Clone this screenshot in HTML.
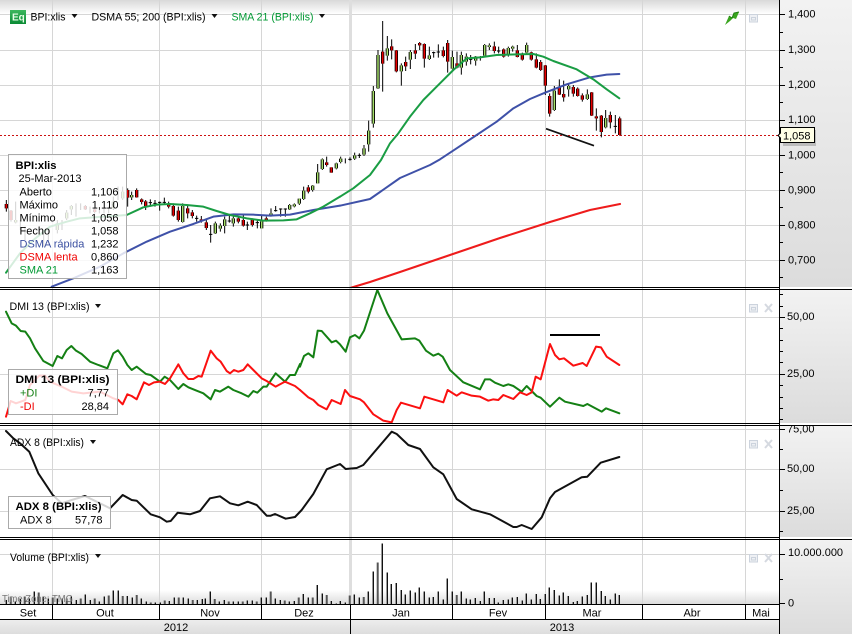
<!DOCTYPE html>
<html><head><meta charset="utf-8"><style>
html,body{margin:0;padding:0;background:#fff}
svg{display:block}
text{font-family:"Liberation Sans",sans-serif;font-size:11px;fill:#000}
.b{font-weight:bold}
.r{text-anchor:end}
.m{text-anchor:middle}
.l{fill:none;stroke-linejoin:round;stroke-linecap:round}
</style></head><body>
<svg width="852" height="634" viewBox="0 0 852 634" xmlns="http://www.w3.org/2000/svg">
<defs>
<linearGradient id="top" x1="0" y1="0" x2="0" y2="1"><stop offset="0" stop-color="#d9d9d9"/><stop offset="1" stop-color="#fff"/></linearGradient>
<linearGradient id="vb" x1="0" y1="0" x2="0" y2="1"><stop offset="0" stop-color="#fff"/><stop offset="1" stop-color="#dcdcdc"/></linearGradient>
<linearGradient id="ax" x1="0" y1="0" x2="0" y2="1"><stop offset="0" stop-color="#f2f2f2"/><stop offset="1" stop-color="#dcdcdc"/></linearGradient>
<linearGradient id="yr" x1="0" y1="0" x2="0" y2="1"><stop offset="0" stop-color="#eeeeee"/><stop offset="1" stop-color="#dddddd"/></linearGradient>
<linearGradient id="eq" x1="0" y1="0" x2="0" y2="1"><stop offset="0" stop-color="#3db85e"/><stop offset="1" stop-color="#0a8a34"/></linearGradient>
<clipPath id="c1"><rect x="0" y="0" width="779" height="287"/></clipPath>
<clipPath id="c2"><rect x="0" y="290" width="779" height="133"/></clipPath>
<clipPath id="c3"><rect x="0" y="426" width="779" height="111"/></clipPath>
<clipPath id="cax"><rect x="780" y="426" width="72" height="20"/></clipPath>
<path id="b1g" fill="none" d="M47 660V667M172 670V690M200 638V655M214 618V628M340 605V625M368 575V595M395 585V592M548 618V666M646 670V700M661 677V686M674 658V678M700 655V670M785 664V685M813 640V647M869 615V628M883 613V619M898 596V611M911 572V597M938 557V570M953 517V550M967 478V507M1009 490V505"/>
<path id="b1r" fill="none" d="M19 612V625M33 632V660M256 618V628M284 628V636M383 570V593M410 570V592M425 598V606M437 604V619M506 612V620M520 618V647M535 632V660M563 625V640M577 637V648M604 658V662M619 667V684M715 655V665M730 660V677M757 660V675M799 655V660M925 562V575M980 487V495M994 502V518"/>
<path id="b2g" fill="none" d="M2 476V486M44 466V476M72 445V464M86 392V433M100 273V371M114 165V265M142 145V167M184 196V214M211 156V179M268 166V177M337 171V206M364 165V203M379 170V185M407 170V182M434 135V167M448 136V141M505 144V163M518 140V146M560 135V158M643 272V330M686 258V268M742 283V297M797 354V382"/>
<path id="b2r" fill="none" d="M128 155V191M155 139V151M169 151V214M197 186V199M226 151V161M239 129V136M253 132V176M310 151V168M323 129V185M351 190V203M463 139V153M491 148V170M532 151V171M547 165V179M574 157V179M589 178V203M602 186V210M616 196V257M629 288V341M658 262V284M671 282V292M700 261V281M713 266V288M727 286V299M755 277V347M769 349V355M784 347V396M811 345V367M839 355V405"/>
<path id="v1" fill="none" d="M19 207V195M33 207V185M47 207V200M61 207V190M75 207V185M89 207V190M103 207V170M117 207V172M131 207V185M145 207V190M159 207V188M173 207V190M187 207V190M201 207V190M215 207V185M229 207V195M243 207V190M257 207V178M271 207V195M285 207V190M299 207V200M313 207V185M327 207V182M341 207V167M355 207V167M369 207V183M383 207V183M397 207V188M411 207V180M425 207V190M439 207V200M453 207V203M467 207V203M481 207V203M495 207V197M509 207V198M523 207V187M537 207V187M551 207V187M565 207V190M579 207V195M593 207V195M607 207V192M617 207V190M631 207V170M645 207V192M659 207V200M673 207V195M687 207V200M701 207V200M715 207V200M729 207V200M743 207V197M757 207V197M771 207V200M785 207V187M799 207V187M813 207V170M827 207V190M841 207V195M855 207V197M869 207V200M883 207V198M897 207V187M911 207V177M925 207V187M939 207V187M953 207V150M967 207V175M981 207V180M995 207V198M1009 207V205"/>
<path id="v2" fill="none" d="M2 207V198M16 207V202M30 207V182M44 207V178M58 207V188M72 207V186M86 207V170M100 207V110M114 207V83M128 207V25M142 207V112M155 207V147M169 207V144M184 207V165M197 207V178M211 207V166M226 207V172M239 207V157M253 207V170M268 207V188M281 207V186M295 207V169M310 207V193M323 207V131M337 207V169M351 207V180M364 207V169M379 207V190M392 207V193M407 207V189M421 207V198M434 207V170M448 207V189M463 207V189M476 207V202M491 207V195M505 207V194M518 207V187M532 207V186M547 207V197M560 207V176M574 207V193M589 207V177M602 207V192M616 207V177M629 207V157M643 207V165M658 207V181M671 207V172M686 207V183M700 207V201M713 207V198M727 207V185M742 207V180M755 207V143M769 207V142M784 207V168M797 207V183M811 207V194M826 207V176M839 207V180"/>
</defs>

<!-- backgrounds -->
<rect width="852" height="634" fill="#fff"/>
<rect x="0" y="0" width="779" height="14" fill="url(#top)"/>
<rect x="0" y="590" width="779" height="14" fill="url(#vb)"/>
<rect x="0" y="619" width="779" height="15" fill="url(#yr)"/>
<rect x="780" y="0" width="72" height="287" fill="url(#ax)"/>
<rect x="780" y="289" width="72" height="134" fill="url(#ax)"/>
<rect x="780" y="425" width="72" height="112" fill="url(#ax)"/>
<rect x="780" y="539" width="72" height="95" fill="url(#ax)"/>

<!-- grid -->
<g stroke="#d6d6d6" stroke-width="1" shape-rendering="crispEdges">
<path d="M0 14.5H779M0 50.5H779M0 85.5H779M0 120.5H779M0 155.5H779M0 190.5H779M0 225.5H779M0 260.5H779"/>
<path d="M0 317.5H779M0 374.5H779M0 429.5H779M0 469.5H779M0 511.5H779M0 554.5H779"/>
<path d="M52.5 0V604M159.5 0V604M261.5 0V604M452.5 0V604M545.5 0V604M642.5 0V604M745.5 0V604"/>
<path d="M350.5 0V604" stroke-width="3" stroke="#dedede"/>
</g>

<!-- dotted last price -->
<path d="M0 135.5H779" stroke="#c11" stroke-width="1" stroke-dasharray="2 2" shape-rendering="crispEdges"/>

<!-- candles -->
<g clip-path="url(#c1)">
<g transform="scale(.33333)">
<path fill="none" stroke="#000" stroke-width="3" d="M19 600V635M33 630V665M47 605V670M61 660V690M75 680V720M131 690V740M145 690V730M172 660V700M186 660V690M200 630V660M214 615V645M228 610V650M242 610V630M256 615V630M270 620V640M284 625V640M298 625V640M312 625V640M326 620V640M340 590V630M354 560V600M368 560V600M383 565V620M395 575V600M410 565V593M425 595V613M437 600V630M451 598V620M465 600V620M479 605V632M493 593V615M506 605V625M520 610V650M535 620V665M548 610V668M563 615V655M577 630V655M590 647V665M604 648V668M619 660V690M632 675V728M646 665V702M661 670V695M674 650V700M688 645V668M700 645V680M715 650V670M730 645V680M742 665V690M757 655V680M772 660V685M785 648V685M799 650V665M813 625V650M827 618V635M842 625V650M856 625V650M869 612V630M883 610V622M898 596V615M911 560V600M925 555V580M938 555V575M953 492V550M967 475V510M980 470V500M994 502V518M1009 488V508"/>
<path fill="none" stroke="#000" stroke-width="3" d="M446 608H456M460 610H470M474 607H484M488 607H498M585 655H595M627 703H637M683 663H693M737 675H747M767 668H777M822 632H832M837 627H847M851 627H861"/>
<use href="#b1g" stroke="#000" stroke-width="10"/>
<use href="#b1g" stroke="#a6df6a" stroke-width="4.5"/>
<use href="#b1r" stroke="#000" stroke-width="10"/>
<use href="#b1r" stroke="#e80000" stroke-width="5"/>
</g>
<g transform="translate(340,0) scale(.33333)">
<path fill="none" stroke="#000" stroke-width="3" d="M2 470V490M16 475V490M30 472V482M44 458V480M58 460V474M72 435V468M86 362V455M100 258V383M114 150V267M128 63V275M142 108V182M155 118V178M169 150V217M184 190V257M197 170V213M211 150V207M226 132V177M239 126V150M253 130V203M268 140V180M281 155V173M295 133V173M310 140V172M323 120V218M337 152V208M351 155V205M364 155V224M379 160V197M392 165V193M407 168V197M421 168V182M434 132V170M448 130V150M463 125V160M476 140V160M491 145V173M505 140V170M518 137V155M532 135V172M547 158V182M560 128V160M574 155V182M589 160V205M602 180V213M616 195V285M629 280V350M643 258V333M658 238V285M671 242V305M686 250V290M700 255V290M713 262V290M727 280V305M742 268V300M755 276V348M769 325V392M784 345V412M797 330V385M811 335V385M826 345V400M839 350V407"/>
<path fill="none" stroke="#000" stroke-width="3" d="M25 478H35M53 466H63M276 158H286M290 156H300M387 178H397M416 172H426M471 153H481M821 379H831"/>
<use href="#b2g" stroke="#000" stroke-width="10"/>
<use href="#b2g" stroke="#a6df6a" stroke-width="4.5"/>
<use href="#b2r" stroke="#000" stroke-width="10"/>
<use href="#b2r" stroke="#e80000" stroke-width="5"/>
</g>

<!-- main lines -->
<polyline class="l" stroke="#ee1c1c" stroke-width="2.1" points="350,288 370,282 400,272 450,255 500,238 550,222 590,210 620,204"/>
<g transform="scale(.33333)">
<polyline class="l" stroke="#3f51a8" stroke-width="6" points="155,860 220,835 300,800 370,760 440,725 510,695 580,672 640,650 700,643 760,644 810,647 870,644 940,630 1020,617"/>
<polyline class="l" stroke="#1a9d44" stroke-width="6" points="18,818 60,760 100,720 150,680 200,665 240,655 270,653 310,650 380,645 430,622 470,614 510,612 560,615 610,620 650,633 690,645 740,655 790,662 850,661 890,658 930,640 970,620 1020,590"/>
</g>
<g transform="translate(340,0) scale(.33333)">
<polyline class="l" stroke="#3f51a8" stroke-width="6" points="0,617 90,597 180,534 270,495 300,478 350,445 410,405 470,365 520,325 570,297 615,278 680,253 750,232 800,224 838,222"/>
<polyline class="l" stroke="#1a9d44" stroke-width="6" points="0,590 40,565 90,525 123,480 150,430 175,400 210,350 250,300 300,250 340,210 380,175 420,172 470,165 530,163 580,162 610,170 640,183 710,208 760,238 800,268 838,295"/>
<path stroke="#111" stroke-width="5" d="M618 386L762 437"/>
</g>
</g>

<!-- DMI lines -->
<g clip-path="url(#c2)">
<g transform="translate(0,285) scale(.33333)">
<polyline class="l" stroke="#148014" stroke-width="6" points="18,80 35,115 48,122 62,138 76,140 90,160 105,190 130,228 158,243 172,213 186,220 200,195 214,183 228,197 245,207 270,230 295,240 322,250 340,205 354,196 368,215 382,240 395,255 410,245 438,267 452,270 480,290 494,275 510,285 535,312 550,297 565,307 590,317 610,325 632,343 645,315 660,320 685,305 700,315 725,325 745,335 760,318 772,323 790,305 800,305 827,265 855,290 870,270 885,270 900,237"/>
<polyline class="l" stroke="#fb1010" stroke-width="6" points="18,395 32,348 48,355 62,350 76,345 90,300 118,272 135,272 150,290 185,305 215,320 250,325 300,320 340,340 355,345 368,358 382,328 395,333 410,343 432,292 447,300 462,292 480,290 495,297 510,280 535,238 550,265 565,282 580,282 595,273 605,275 632,197 650,220 662,230 680,258 690,265 702,255 715,260 730,255 743,238 760,255 785,280 800,288 827,305 855,290 885,303 900,315"/>
</g>
<g transform="translate(300,285) scale(.33333)">
<polyline class="l" stroke="#148014" stroke-width="6" points="0,245 12,213 25,205 40,217 53,137 65,138 95,172 108,167 120,178 137,200 150,157 165,150 178,160 192,137 232,15 262,85 305,163 345,160 358,167 378,197 400,212 415,206 428,215 450,255 490,292 540,313 555,283 570,283 585,293 610,303 625,298 640,303 665,320 680,303 692,315 710,333 722,338 750,365 778,338 795,350 850,363 862,357 905,380 918,370 958,385"/>
<polyline class="l" stroke="#fb1010" stroke-width="6" points="0,315 25,337 40,345 55,360 80,373 95,345 122,357 135,315 150,333 180,343 192,352 220,388 250,407 275,412 290,375 303,353 360,370 373,335 430,352 443,315 470,332 485,322 515,332 540,335 565,347 580,343 595,345 610,330 640,342 660,322 680,330 695,322 707,275 722,283 750,177 765,210 778,223 792,220 820,242 848,234 860,243 888,185 903,187 920,215 958,240"/>
<path stroke="#000" stroke-width="6" d="M750 150H900"/>
</g>
</g>

<!-- ADX line -->
<g clip-path="url(#c3)">
<polyline class="l" stroke="#111" stroke-width="2" points="6,431 13.3,438.3 20,443.3 29.3,451.7 38.3,473.3 52.7,495 61.7,503.3 71.7,500 85,496 96.7,501.7 110,508.3 122.7,495 131.7,500 136.7,500.7 150.7,514.3 160,517.3 166.7,521.7 170.7,521 177.7,512.7 190,514.3 200,511 210,498.3 220,496.3 230,503.3 238.3,505.3 247.7,501.7 256.7,505 266.7,515.7 270.7,515.7 275,514 285.7,518.7 295,517 301.7,510 313.3,494 326.7,469.3 340,464 345.7,469 356.7,468 363.3,465 391.7,431.7 396.7,434 408.3,445 420,449 433.3,467.3 443.3,474.3 456.7,499 471.7,509.3 490,514.3 513.3,527 516.7,527 521.7,525 531.7,529 541.7,517.3 550,498.3 555,492 581.7,477.3 587.3,476.7 600.7,462.7 619.3,457"/>
</g>

<!-- volume -->
<g shape-rendering="crispEdges">
<g transform="translate(-1,535) scale(.33333)"><use href="#v1" stroke="#999" stroke-width="3"/></g>
<g transform="translate(0,535) scale(.33333)"><use href="#v1" stroke="#111" stroke-width="3"/></g>
<g transform="translate(339,535) scale(.33333)"><use href="#v2" stroke="#999" stroke-width="3"/></g>
<g transform="translate(340,535) scale(.33333)"><use href="#v2" stroke="#111" stroke-width="3"/></g>
</g>
<text x="2" y="602" style="font-size:10.5px;fill:#777" textLength="71" lengthAdjust="spacingAndGlyphs">Time Zone: TMG</text>

<!-- panel borders -->
<g stroke="#000" stroke-width="1" shape-rendering="crispEdges">
<path d="M0 287.5H779M0 289.5H852M0 423.5H779M0 425.5H852M0 537.5H779M0 539.5H852M0 604.5H779M0 619.5H779"/>
<path d="M779.5 0V634M350.5 619V634"/>
<path d="M52.5 604V619M159.5 604V619M261.5 604V619M350.5 604V619M452.5 604V619M545.5 604V619M642.5 604V619M745.5 604V619"/>
<!-- ticks -->
<path d="M780 14.5H785M780 32.5H783M780 50.5H785M780 67.5H783M780 85.5H785M780 102.5H783M780 120.5H785M780 155.5H785M780 172.5H783M780 190.5H785M780 207.5H783M780 225.5H785M780 242.5H783M780 260.5H785M780 277.5H783"/>
<path d="M780 294.5H783M780 306.5H783M780 317.5H785M780 328.5H783M780 340.5H783M780 351.5H783M780 362.5H783M780 374.5H785M780 385.5H783M780 397.5H783M780 408.5H783M780 419.5H783"/>
<path d="M780 429.5H785M780 449.5H783M780 469.5H785M780 490.5H783M780 511.5H785M780 531.5H783"/>
<path d="M780 554.5H785M780 579.5H783M780 603.5H785"/>
</g>

<!-- axis labels -->
<text x="788" y="17.5">1,400</text>
<text x="788" y="53">1,300</text>
<text x="788" y="88">1,200</text>
<text x="788" y="123">1,100</text>
<text x="788" y="158.5">1,000</text>
<text x="788" y="193.5">0,900</text>
<text x="788" y="228.5">0,800</text>
<text x="788" y="263.5">0,700</text>
<text x="787" y="320">50,00</text>
<text x="787" y="377">25,00</text>
<g clip-path="url(#cax)"><text x="787" y="432.5">75,00</text></g>
<text x="787" y="472">50,00</text>
<text x="787" y="514">25,00</text>
<text x="788" y="556">10.000.000</text>
<text x="788" y="606.5">0</text>

<!-- price tag -->
<rect x="783" y="130" width="33" height="16" fill="#999" opacity=".55"/>
<path d="M780.5 127.5H814.5V142.5H780.5V138L778 135.5L780.5 133Z" fill="#ffffe6" stroke="#000" stroke-width="1"/>
<text x="783" y="139.5">1,058</text>

<!-- time labels -->
<text class="m" x="28" y="616.5">Set</text>
<text class="m" x="105" y="616.5">Out</text>
<text class="m" x="210" y="616.5">Nov</text>
<text class="m" x="304" y="616.5">Dez</text>
<text class="m" x="401" y="616.5">Jan</text>
<text class="m" x="498" y="616.5">Fev</text>
<text class="m" x="592" y="616.5">Mar</text>
<text class="m" x="692" y="616.5">Abr</text>
<text class="m" x="761" y="616.5">Mai</text>
<text class="m" x="176" y="631">2012</text>
<text class="m" x="562" y="631">2013</text>

<!-- tooltips -->
<rect x="8.5" y="154.5" width="118" height="124" fill="#fff" fill-opacity=".82" stroke="#aaa" stroke-width="1"/>
<text class="b" x="15.5" y="169" textLength="41" lengthAdjust="spacingAndGlyphs">BPI:xlis</text>
<text x="18.5" y="182">25-Mar-2013</text>
<text x="19.5" y="195.5">Aberto</text><text class="r" x="118.5" y="195.5">1,106</text>
<text x="19.5" y="208.5">Máximo</text><text class="r" x="118.5" y="208.5">1,110</text>
<text x="19.5" y="221.5">Mínimo</text><text class="r" x="118.5" y="221.5">1,056</text>
<text x="19.5" y="234.5">Fecho</text><text class="r" x="118.5" y="234.5">1,058</text>
<text x="19.5" y="247.5" style="fill:#3a4fa0">DSMA rápida</text><text class="r" x="118.5" y="247.5">1,232</text>
<text x="19.5" y="260.5" style="fill:#f00000">DSMA lenta</text><text class="r" x="118.5" y="260.5">0,860</text>
<text x="19.5" y="273.5" style="fill:#009933">SMA 21</text><text class="r" x="118.5" y="273.5">1,163</text>

<rect x="8.5" y="369.5" width="109" height="45" fill="#fff" fill-opacity=".82" stroke="#aaa" stroke-width="1"/>
<text class="b" x="15.5" y="383" textLength="94" lengthAdjust="spacingAndGlyphs">DMI 13 (BPI:xlis)</text>
<text x="20" y="396.5" style="fill:#148014">+DI</text><text class="r" x="109" y="396.5">7,77</text>
<text x="20" y="410" style="fill:#f00000">-DI</text><text class="r" x="109" y="410">28,84</text>

<rect x="8.5" y="496.5" width="102" height="32" fill="#fff" fill-opacity=".82" stroke="#aaa" stroke-width="1"/>
<text class="b" x="15.5" y="510" textLength="86" lengthAdjust="spacingAndGlyphs">ADX 8 (BPI:xlis)</text>
<text x="20" y="523.5">ADX 8</text><text class="r" x="102.5" y="523.5">57,78</text>

<!-- headers -->
<rect x="10" y="10" width="16" height="14" fill="url(#eq)"/>
<text x="12" y="20.5" class="b" style="font-size:10px;fill:#e8ffe8">Eq</text>
<text x="30.5" y="20.5" textLength="35" lengthAdjust="spacingAndGlyphs">BPI:xlis</text>
<path d="M71.5 14H77.5L74.5 18Z" fill="#111"/>
<text x="91.5" y="20.5" textLength="114" lengthAdjust="spacingAndGlyphs">DSMA 55; 200 (BPI:xlis)</text>
<path d="M211.5 14H217.5L214.5 18Z" fill="#111"/>
<text x="231.5" y="20.5" textLength="82" lengthAdjust="spacingAndGlyphs" style="fill:#009933">SMA 21 (BPI:xlis)</text>
<path d="M319 14H325L322 18Z" fill="#111"/>
<text x="9.5" y="310" textLength="80" lengthAdjust="spacingAndGlyphs">DMI 13 (BPI:xlis)</text>
<path d="M95 304H101L98 308Z" fill="#111"/>
<text x="10" y="446" textLength="74" lengthAdjust="spacingAndGlyphs">ADX 8 (BPI:xlis)</text>
<path d="M90 440H96L93 444Z" fill="#111"/>
<text x="10" y="561" textLength="79" lengthAdjust="spacingAndGlyphs">Volume (BPI:xlis)</text>
<path d="M95 554H101L98 558Z" fill="#111"/>

<!-- green arrow -->
<path d="M725 25L729 16L732 18L734 13L739 12L736 19L733 18L730 21Z" fill="#3aa51f"/>
<path d="M729 16L732 18L734 13L739 12" fill="none" stroke="#1e7d10" stroke-width="1"/>

<!-- panel icons -->
<g fill="none" stroke="#ccd3dd" shape-rendering="crispEdges">
<rect x="749.5" y="14.5" width="8" height="7.5" fill="#eef0f4"/><rect x="751.5" y="17.5" width="4" height="2.5"/>
<rect x="749.5" y="304.5" width="8" height="7.5" fill="#eef0f4"/><rect x="751.5" y="307.5" width="4" height="2.5"/>
<rect x="749.5" y="440.5" width="8" height="7.5" fill="#eef0f4"/><rect x="751.5" y="443.5" width="4" height="2.5"/>
<rect x="749.5" y="554.5" width="8" height="7.5" fill="#eef0f4"/><rect x="751.5" y="557.5" width="4" height="2.5"/>
</g>
<g fill="none" stroke="#d5d9e0" stroke-width="2">
<path d="M765 304L772 312M772 304L765 312"/>
<path d="M765 440L772 448M772 440L765 448"/>
<path d="M765 554L772 562M772 554L765 562"/>
</g>
</svg>
</body></html>
